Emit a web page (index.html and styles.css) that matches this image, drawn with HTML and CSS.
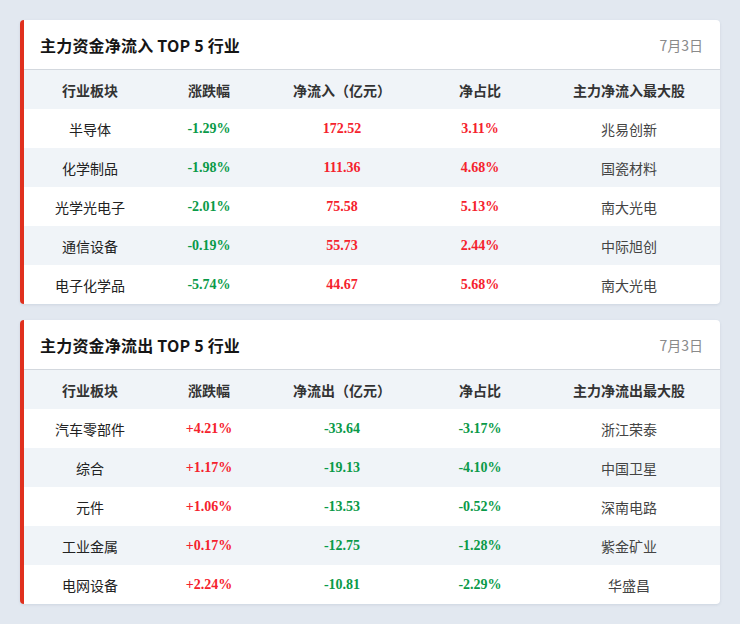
FILE: index.html
```html
<!DOCTYPE html>
<html lang="zh">
<head>
<meta charset="utf-8">
<link rel="stylesheet" href="styles.css">
</head>
<body>
<section class="card">
  <div class="card-head">
    <h2 class="title">主力资金净流入 TOP 5 行业</h2>
    <span class="date">7月3日</span>
  </div>
  <table class="tbl">
    <colgroup><col class="c1"><col class="c2"><col class="c3"><col class="c4"><col class="c5"></colgroup>
    <thead><tr><th>行业板块</th><th>涨跌幅</th><th>净流入（亿元）</th><th>净占比</th><th>主力净流入最大股</th></tr></thead>
    <tbody>
      <tr><td>半导体</td><td class="num down">-1.29%</td><td class="num up">172.52</td><td class="num up">3.11%</td><td class="stock">兆易创新</td></tr>
      <tr><td>化学制品</td><td class="num down">-1.98%</td><td class="num up">111.36</td><td class="num up">4.68%</td><td class="stock">国瓷材料</td></tr>
      <tr><td>光学光电子</td><td class="num down">-2.01%</td><td class="num up">75.58</td><td class="num up">5.13%</td><td class="stock">南大光电</td></tr>
      <tr><td>通信设备</td><td class="num down">-0.19%</td><td class="num up">55.73</td><td class="num up">2.44%</td><td class="stock">中际旭创</td></tr>
      <tr><td>电子化学品</td><td class="num down">-5.74%</td><td class="num up">44.67</td><td class="num up">5.68%</td><td class="stock">南大光电</td></tr>
    </tbody>
  </table>
</section>
<section class="card">
  <div class="card-head">
    <h2 class="title">主力资金净流出 TOP 5 行业</h2>
    <span class="date">7月3日</span>
  </div>
  <table class="tbl">
    <colgroup><col class="c1"><col class="c2"><col class="c3"><col class="c4"><col class="c5"></colgroup>
    <thead><tr><th>行业板块</th><th>涨跌幅</th><th>净流出（亿元）</th><th>净占比</th><th>主力净流出最大股</th></tr></thead>
    <tbody>
      <tr><td>汽车零部件</td><td class="num up">+4.21%</td><td class="num down">-33.64</td><td class="num down">-3.17%</td><td class="stock">浙江荣泰</td></tr>
      <tr><td>综合</td><td class="num up">+1.17%</td><td class="num down">-19.13</td><td class="num down">-4.10%</td><td class="stock">中国卫星</td></tr>
      <tr><td>元件</td><td class="num up">+1.06%</td><td class="num down">-13.53</td><td class="num down">-0.52%</td><td class="stock">深南电路</td></tr>
      <tr><td>工业金属</td><td class="num up">+0.17%</td><td class="num down">-12.75</td><td class="num down">-1.28%</td><td class="stock">紫金矿业</td></tr>
      <tr><td>电网设备</td><td class="num up">+2.24%</td><td class="num down">-10.81</td><td class="num down">-2.29%</td><td class="stock">华盛昌</td></tr>
    </tbody>
  </table>
</section>
</body>
</html>
```

FILE: styles.css
```css
html, body {
  margin: 0;
  padding: 0;
}
body {
  background: #e2e8f0;
  padding: 20px;
  font-family: "Noto Sans CJK SC", "Noto Sans", sans-serif;
  display: flex;
  flex-direction: column;
  gap: 16px;
}
.card {
  background: #ffffff;
  border-left: 4px solid #e0301e;
  border-radius: 4px;
  box-shadow: 0 1px 3px rgba(30, 50, 80, 0.10);
  overflow: hidden;
}
.card-head {
  height: 49px;
  display: flex;
  align-items: center;
  justify-content: space-between;
  padding: 0 17px 0 16px;
  border-bottom: 1px solid #d3d8de;
}
.title {
  margin: 0;
  font-size: 16px;
  font-weight: 700;
  color: #151515;
  line-height: 1;
  letter-spacing: 0.2px;
}
.date {
  font-size: 14px;
  color: #8a8a8a;
  line-height: 1;
}
.tbl {
  width: 100%;
  border-collapse: collapse;
  table-layout: fixed;
}
.c1 { width: 132px; }
.c2 { width: 106px; }
.c3 { width: 160px; }
.c4 { width: 116px; }
.c5 { width: 182px; }
.tbl th, .tbl td {
  height: 39px;
  padding: 0;
  text-align: center;
  vertical-align: middle;
  font-size: 14px;
  line-height: 1;
}
.tbl th {
  background: #f0f4f8;
  color: #333333;
  font-weight: 700;
}
.tbl td {
  color: #222222;
}
.tbl tbody tr:nth-child(even) td {
  background: #f0f4f8;
}
.tbl td.stock {
  color: #444444;
}
.tbl td.num {
  font-family: "Liberation Serif", "Times New Roman", serif;
  font-weight: 700;
  font-size: 14px;
}
.tbl td.up {
  color: #f5222d;
}
.tbl td.down {
  color: #0a9a48;
}
```
